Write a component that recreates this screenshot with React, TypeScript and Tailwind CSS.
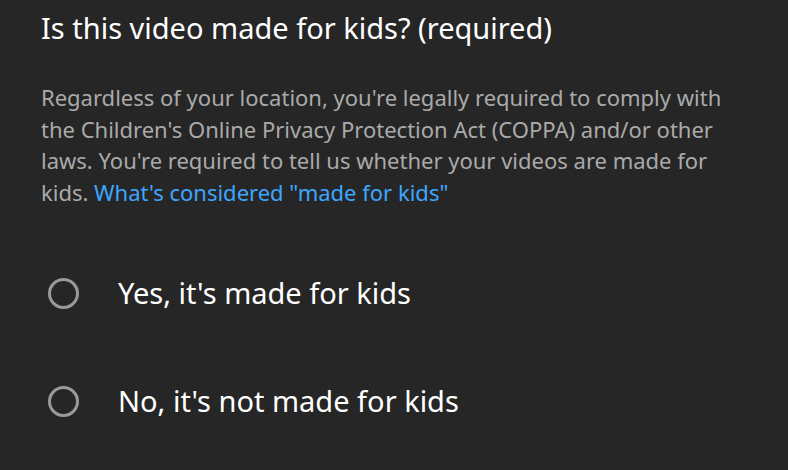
export default function App() {
  const options = ["Yes, it's made for kids", "No, it's not made for kids"];

  return (
    <div className="w-[788px] h-[470px] bg-[#262626] overflow-hidden font-['Noto_Sans',sans-serif]">
      <div className="pl-[41px] pr-4 pt-[9px]">
        <h1 className="text-[29px] leading-[38px] text-white">
          Is this video made for kids? (required)
        </h1>
        <p className="mt-[35px] text-[22px] leading-[31.5px] text-[#aaaaaa] whitespace-nowrap">
          Regardless of your location, you're legally required to comply with
          <br />
          the Children's Online Privacy Protection Act (COPPA) and/or other
          <br />
          laws. You're required to tell us whether your videos are made for
          <br />
          kids. <span className="text-[#3ea6ff]">What's considered "made for kids"</span>
        </p>
      </div>

      <div className="mt-[66px] flex flex-col gap-[70px] pl-[48px]">
        {options.map((label) => (
          <label key={label} className="flex items-center h-[38px]">
            <span className="w-[31px] h-[31px] rounded-full border-[3px] border-[#9a9a9a]" />
            <span className="ml-[39px] text-[29px] text-white">{label}</span>
          </label>
        ))}
      </div>
    </div>
  );
}
